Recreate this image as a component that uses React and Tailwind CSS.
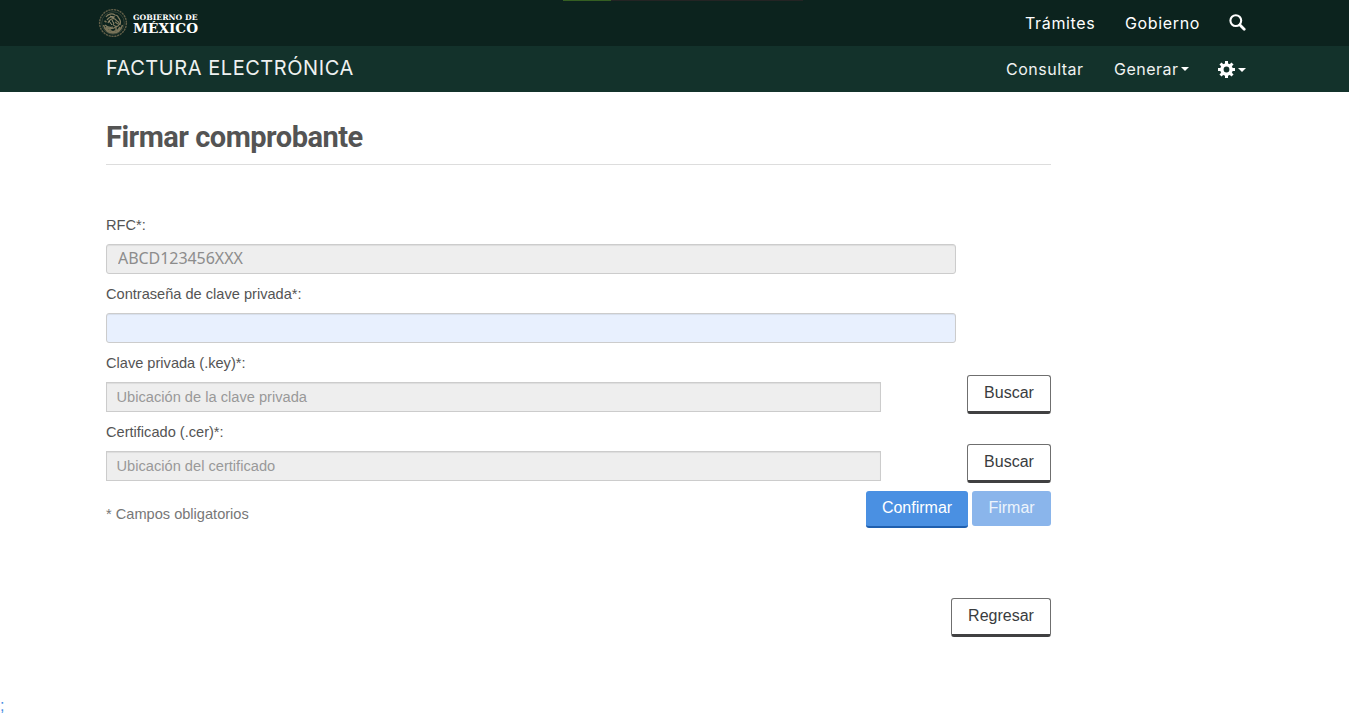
import React from "react";

const arial = "font-['Liberation_Sans',Arial,sans-serif]";

function Emblem() {
  return (
    <svg width="30" height="30" viewBox="0 0 30 30" fill="none" stroke="#847d61" className="shrink-0">
      <circle cx="15" cy="15" r="13.4" strokeWidth="1.4" strokeDasharray="2.2 .7" stroke="#625f48" />
      <circle cx="15" cy="15" r="11.3" strokeWidth=".7" stroke="#464d3d" />
      <path d="M8 9c2-3 6-4 9-2 2 0 3 1 3.500 2.500M9 12c2-3 5-4 8-3M10 15c1-3 4-5 7-4l2 2c2 1 3 3 1 5-2 1-4 0-5-2M7 17c2 2 5 3 8 2M9 20c3 1 6 1 9-1M20 9c2 2 3 5 2 8" strokeWidth="1.200" />
      <path d="M5.500 17c1.500 5 5 8 9.500 8s8-3 9.500-8M8 19l2 3 3 1 2 1 2-1 3-1 2-3M12 20v3M18 19v4M6.500 13l2 1M17 14l3 2" strokeWidth="1.500" stroke="#797459" />
      <path d="M11 13l3 4M14 12l2 4M12 8l4 2" strokeWidth="1" stroke="#a0977a" />
    </svg>
  );
}

function Logo() {
  return (
    <div className="flex h-[46px] w-[110px] items-center">
      <Emblem />
      <svg width="70" height="30" viewBox="0 0 70 30" fill="#ffffff" fontFamily="'DejaVu Serif','Liberation Serif',serif" className="ml-[5px]">
        <text x="0" y="11.500" fontSize="7.500" fontWeight="700" textLength="64.500" lengthAdjust="spacingAndGlyphs">GOBIERNO DE</text>
        <text x="0" y="25" fontSize="13" fontWeight="700" textLength="65" lengthAdjust="spacingAndGlyphs">MÉXICO</text>
      </svg>
    </div>
  );
}

function SearchIcon() {
  return (
    <svg width="17" height="17" viewBox="0 0 17 17" fill="none" stroke="#ffffff">
      <circle cx="6.800" cy="6.600" r="5.400" strokeWidth="2.100" />
      <path d="M11 11l4.200 4.200" strokeWidth="2.800" strokeLinecap="round" />
    </svg>
  );
}

function CogIcon() {
  return (
    <svg width="17" height="17" viewBox="0 0 17 17" fill="none" stroke="#ffffff">
      <circle cx="8.500" cy="8.500" r="4.600" strokeWidth="3.400" />
      <path d="M8.500 0v3.500M8.500 13.500v3.500M0 8.500h3.500M13.500 8.500h3.500M2.500 2.500l2.500 2.500M12 12l2.500 2.500M2.500 14.500l2.500-2.500M12 5l2.500-2.500" strokeWidth="3" />
    </svg>
  );
}

function Caret() {
  return <span className="inline-block border-x-4 border-t-4 border-x-transparent border-t-white" />;
}

function Label({ children }) {
  return <label className="flex h-[38px] items-center pb-px text-[14.6px] leading-5 text-[#545454]">{children}</label>;
}

function OutlineButton({ className, children }) {
  return (
    <button type="button" className={"h-[39px] rounded-[3px] border border-b-[3px] border-[#6f6f6f] border-b-[#404041] bg-white pb-[1px] text-center text-[16px] leading-6 text-[#393c3e] " + className}>
      {children}
    </button>
  );
}

function FileRow({ label, placeholder }) {
  return (
    <div className="flex h-[69px] items-start justify-between">
      <div>
        <Label>{label}</Label>
        <input
          disabled
          placeholder={placeholder}
          className="block h-[30px] w-[775px] border border-[#ccc] bg-[#eee] px-[9.500px] text-[14.65px] shadow-[inset_0_1px_1px_rgba(0,0,0,0.075)] placeholder:text-[#999]"
        />
      </div>
      <OutlineButton className="mt-[31px] w-[84px]">Buscar</OutlineButton>
    </div>
  );
}

export default function App() {
  return (
    <div className={"flex h-[726px] flex-col overflow-hidden bg-white " + arial}>
      <header className="font-['Inter',sans-serif] text-[16px] text-white">
        <div className="relative flex h-[46px] justify-between bg-[#0c231e] pl-[98px] pr-[103px]">
          <div className="absolute left-[563px] top-0 flex h-px w-[240px] bg-[#242424]">
            <div className="w-12 bg-[#355f22]" />
          </div>
          <Logo />
          <nav className="flex items-center">
            <a className="w-[100px] tracking-[0.65px]">Trámites</a>
            <a className="w-[104px] tracking-[0.65px]">Gobierno</a>
            <span className="pb-[2px]"><SearchIcon /></span>
          </nav>
        </div>
        <div className="flex h-[46px] justify-between bg-[#13322b] pl-[106px] pr-[103px] text-[#f0f3f2]">
          <div className="pt-[7px] text-[20px] leading-[30px] tracking-[0.55px] text-[#eef1f0]">FACTURA ELECTRÓNICA</div>
          <nav className="flex items-center">
            <a className="w-[108px] tracking-[0.5px]">Consultar</a>
            <a className="flex w-[104px] items-center"><span className="w-[67px] tracking-[0.5px]">Generar</span><Caret /></a>
            <a className="flex items-center gap-[3px] pt-[1px]"><CogIcon /><Caret /></a>
          </nav>
        </div>
      </header>

      <main className="ml-[106px] w-[945px]">
        <h1 className="h-[73px] border-b border-[#ddd] pt-[26px] font-['Roboto',sans-serif] text-[29px] leading-[39px] font-bold tracking-[-0.5px] text-[#545454]">Firmar comprobante</h1>
        <form className="pt-[41px]">
          <div className="h-[69px]">
            <Label>RFC*:</Label>
            <input disabled defaultValue="ABCD123456XXX" className="block h-[30px] w-[850px] rounded-[3px] border border-[#ccc] bg-[#eee] px-[11px] pb-[2px] font-['Noto_Sans',sans-serif] text-[16px] tracking-[-0.05px] text-[#8c8c8c] shadow-[inset_0_1px_1px_rgba(0,0,0,0.075)]" />
          </div>
          <div className="h-[69px]">
            <Label>Contraseña de clave privada*:</Label>
            <input type="password" className="block h-[30px] w-[850px] rounded-[3px] border border-[#ccc] bg-[#e8f0fe] shadow-[inset_0_1px_1px_rgba(0,0,0,0.075)]" />
          </div>
          <FileRow label="Clave privada (.key)*:" placeholder="Ubicación de la clave privada" />
          <FileRow label="Certificado (.cer)*:" placeholder="Ubicación del certificado" />
          <div className="flex h-[116px] items-start justify-between pt-[9px]">
            <p className="pt-[13px] text-[14.6px] leading-5 text-[#777]">* Campos obligatorios</p>
            <div className="flex gap-1">
              <button type="button" className="h-[37px] w-[102px] rounded-[3px] border-b-2 border-[#1f5fae] bg-[#4a90e2] pb-[2px] text-[16px] text-white">Confirmar</button>
              <button type="button" disabled className="h-[35px] w-[79px] rounded-[3px] bg-[#8ab5eb] pb-[2px] text-[16px] text-[#edf4fc]">Firmar</button>
            </div>
          </div>
          <div className="flex justify-end">
            <OutlineButton className="w-[100px]">Regresar</OutlineButton>
          </div>
        </form>
      </main>
      <footer className="mt-auto h-[32px] text-[16px] leading-6 text-[#4a90e2]">;</footer>
    </div>
  );
}
